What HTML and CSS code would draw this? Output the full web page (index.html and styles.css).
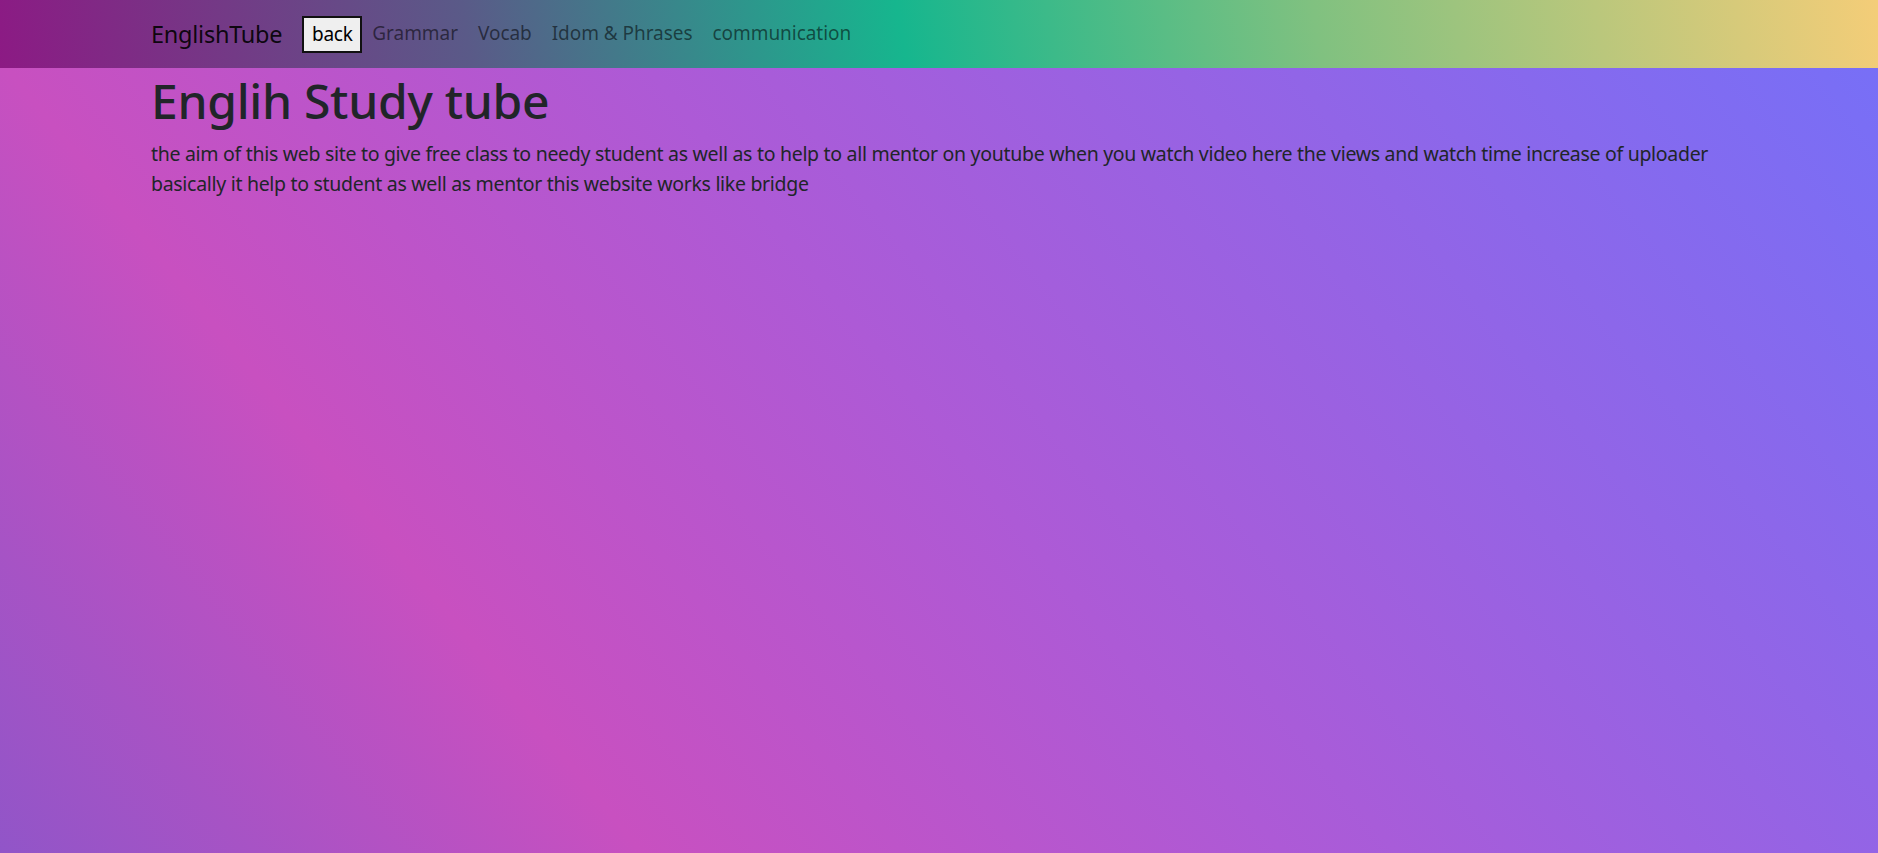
FILE: index.html
```html
<!DOCTYPE html>
<html lang="en">
<head>
<meta charset="utf-8">
<title>EnglishTube</title>
<link rel="stylesheet" href="styles.css">
</head>
<body>
<nav class="navbar">
  <a class="brand" href="#">EnglishTube</a>
  <button class="back">back</button>
  <ul class="nav">
    <li><a class="nav-link" href="#">Grammar</a></li>
    <li><a class="nav-link" href="#">Vocab</a></li>
    <li><a class="nav-link" href="#">Idom &amp; Phrases</a></li>
    <li><a class="nav-link" href="#">communication</a></li>
  </ul>
</nav>
<main class="content">
  <h1 class="title">Englih Study tube</h1>
  <p class="lead">the aim of this web site to give free class to needy student as well as to help to all mentor on youtube when you watch video here the views and watch time increase of uploader basically it help to student as well as mentor this website works like bridge</p>
</main>
</body>
</html>
```
FILE: styles.css
```css
html, body {
  margin: 0;
  height: 100%;
}
body {
  font-family: "Noto Sans", "Open Sans", sans-serif;
  color: #212529;
  background: linear-gradient(51deg, #9155c8 0%, #c850c0 25%, #ad5ad6 50%, #7570f8 100%);
  min-height: 853px;
}
.navbar {
  height: 68px;
  box-sizing: border-box;
  display: flex;
  align-items: center;
  padding: 0 150px 0 151px;
  background: linear-gradient(80deg, #8c1a84 0%, #5a5a88 25%, #16b68e 48%, #80c180 70%, #f4cd78 100%);
}
.brand {
  font-size: 23.5px;
  letter-spacing: -0.25px;
  color: rgba(0, 0, 0, 0.9);
  text-decoration: none;
  margin-right: 20px;
}
.back {
  font-family: inherit;
  font-size: 19px;
  letter-spacing: -0.2px;
  color: #000;
  background: #efefef;
  border: 2px solid #111;
  padding: 1px 4px 3px;
  height: 37px;
  margin-top: 1px;
  width: 60px;
}
.nav {
  list-style: none;
  margin: 0;
  padding: 0;
  display: flex;
}
.nav-link {
  display: block;
  padding: 5px 10px 7px;
  font-size: 19px;
  letter-spacing: -0.05px;
  color: rgba(0, 0, 0, 0.55);
  text-decoration: none;
}
.content {
  padding: 0 150px 0 151px;
}
.title {
  margin: 0 0 8px;
  padding-top: 3px;
  font-size: 48px;
  letter-spacing: -0.3px;
  line-height: 60px;
  font-weight: 500;
}
.lead {
  margin: 0;
  font-size: 19.5px;
  letter-spacing: -0.3px;
  line-height: 30px;
}
```
